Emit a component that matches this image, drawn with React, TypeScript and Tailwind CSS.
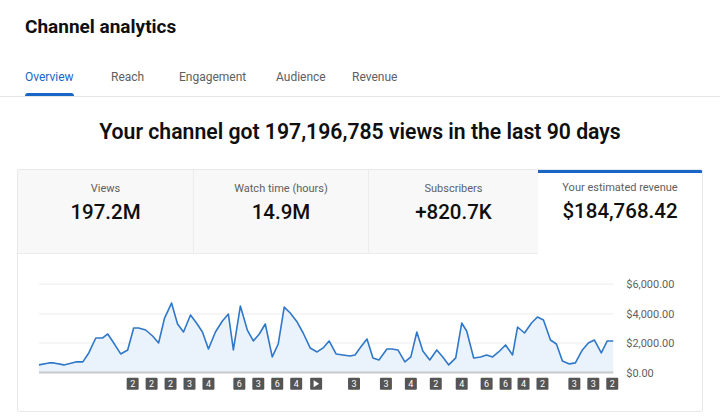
import React from 'react'

const tabs = [
  { label: 'Overview', width: 'w-[86px]', active: true },
  { label: 'Reach', width: 'w-[68px]' },
  { label: 'Engagement', width: 'w-[97px]' },
  { label: 'Audience', width: 'w-[76px]' },
  { label: 'Revenue', width: 'w-[60px]' },
]

const metrics = [
  { label: 'Views', value: '197.2M', width: 'w-[175px]' },
  { label: 'Watch time (hours)', value: '14.9M', width: 'w-[175px]' },
  { label: 'Subscribers', value: '+820.7K', width: 'w-[170px]' },
  { label: 'Your estimated revenue', value: '$184,768.42', width: 'flex-1', active: true },
]

// daily revenue line, in page coordinates
const points: [number, number][] = [
  [38, 364], [48, 362], [53, 362], [63, 364], [75, 361], [82, 361], [88, 352], [95, 337],
  [102, 337], [107, 333], [113, 342], [120, 353], [127, 349], [133, 327], [138, 327], [145, 329],
  [152, 335], [158, 342], [164, 317], [171, 302], [177, 323], [183, 331], [190, 314], [196, 322],
  [202, 331], [208, 348], [215, 331], [222, 320], [228, 313], [233, 349], [240, 305], [247, 329],
  [253, 340], [259, 333], [265, 323], [272, 356], [278, 343], [284, 306], [290, 312], [297, 321],
  [303, 332], [310, 347], [317, 351], [323, 347], [329, 340], [336, 353], [343, 354], [350, 355],
  [355, 354], [360, 347], [367, 338], [373, 357], [379, 359], [387, 348], [392, 348], [398, 349],
  [405, 361], [411, 356], [417, 331], [423, 350], [430, 359], [437, 349], [443, 356], [449, 364],
  [456, 357], [462, 322], [467, 330], [474, 357], [481, 356], [487, 354], [493, 356], [499, 351],
  [506, 344], [513, 354], [518, 326], [525, 332], [532, 322], [538, 316], [544, 319], [551, 339],
  [557, 343], [563, 360], [570, 363], [576, 362], [583, 349], [589, 342], [595, 339], [602, 352],
  [608, 340], [614, 340],
]

const badges: [number, string][] = [
  [132, '2'], [151, '2'], [170, '2'], [189, '3'], [208, '4'], [239, '6'], [258, '3'], [277, '6'],
  [296, '4'], [316, 'play'], [354, '3'], [386, '3'], [411, '4'], [436, '2'], [462, '4'], [487, '6'],
  [506, '6'], [524, '4'], [543, '2'], [575, '3'], [594, '3'], [613, '2'],
]

const axis: [number, string][] = [
  [283, '$6,000.00'],
  [313, '$4,000.00'],
  [342, '$2,000.00'],
  [372, '$0.00'],
]

function RevenueChart() {
  const line = points.map(([x, y], i) => `${i ? 'L' : 'M'}${x} ${y}`).join(' ')
  const area = `${line} L614 371 L38 371 Z`
  return (
    <svg viewBox="17 253 686 157" className="block w-full h-[157px]">
      {[283, 313, 342].map((y) => (
        <line key={y} x1={38} x2={614} y1={y} y2={y} stroke="#ececec" strokeWidth={1} />
      ))}
      <path d={area} fill="#eaf3fc" />
      <path d={line} fill="none" stroke="#2f77c8" strokeWidth={1.6} strokeLinejoin="round" />
      <line x1={38} x2={614} y1={371.5} y2={371.5} stroke="#cacaca" strokeWidth={2} />
      {axis.map(([y, t]) => (
        <text key={t} x={627} y={y + 4} fontSize={11} fill="#606060" fontFamily="Roboto, sans-serif">
          {t}
        </text>
      ))}
      {badges.map(([x, t], i) => (
        <g key={i}>
          <rect x={x - 6} y={377} width={12} height={12} rx={1} fill="#555555" />
          {t === 'play' ? (
            <path d={`M${x - 2.5} ${379.5} L${x + 3} ${383} L${x - 2.5} ${386.5} Z`} fill="#ffffff" />
          ) : (
            <text x={x} y={386.5} fontSize={9} fill="#ffffff" textAnchor="middle" fontFamily="Roboto, sans-serif">
              {t}
            </text>
          )}
        </g>
      ))}
    </svg>
  )
}

export default function App() {
  return (
    <div className="w-[720px] h-[416px] overflow-hidden bg-white text-[#0f0f0f] font-['Roboto','Noto_Sans',sans-serif]">
      <div className="px-[25px] pt-[14px]">
        <h1 className="text-[19px] leading-[26px] font-bold">Channel analytics</h1>
        <nav className="flex mt-[24px]">
          {tabs.map((tab) => (
            <div key={tab.label} className={tab.width}>
              <div className={`inline-flex flex-col text-[12px] ${tab.active ? 'text-[#1a66c6]' : 'text-[#606060]'}`}>
                <span className="leading-[16px]">{tab.label}</span>
                <span className={`mt-[8px] h-[3px] rounded-t-sm ${tab.active ? 'bg-[#1a66c6]' : 'bg-transparent'}`} />
              </div>
            </div>
          ))}
        </nav>
      </div>
      <div className="border-t border-[#e5e5e5]" />

      <h2 className="mt-[20px] text-center text-[21.2px] leading-[30px] font-semibold">
        Your channel got 197,196,785 views in the last 90 days
      </h2>

      <div className="mx-[17px] mt-[22px] w-[686px] border border-[#e8e8e8] rounded-[2px] overflow-hidden">
        <div className="flex h-[84px]">
          {metrics.map((m, i) => (
            <div
              key={m.label}
              className={`${m.width} flex flex-col items-center ${
                m.active ? 'bg-white border-t-[3px] border-[#1a66c6] pt-[8px]' : 'bg-[#f8f8f8] border-b border-[#ececec] pt-[12px]'
              } ${i > 0 && !m.active ? 'border-l border-l-[#ececec]' : ''}`}
            >
              <span className="text-[11px] leading-[14px] text-[#606060]">{m.label}</span>
              <span className="mt-[3px] text-[20.5px] leading-[26px] font-medium">{m.value}</span>
            </div>
          ))}
        </div>
        <RevenueChart />
      </div>
    </div>
  )
}
